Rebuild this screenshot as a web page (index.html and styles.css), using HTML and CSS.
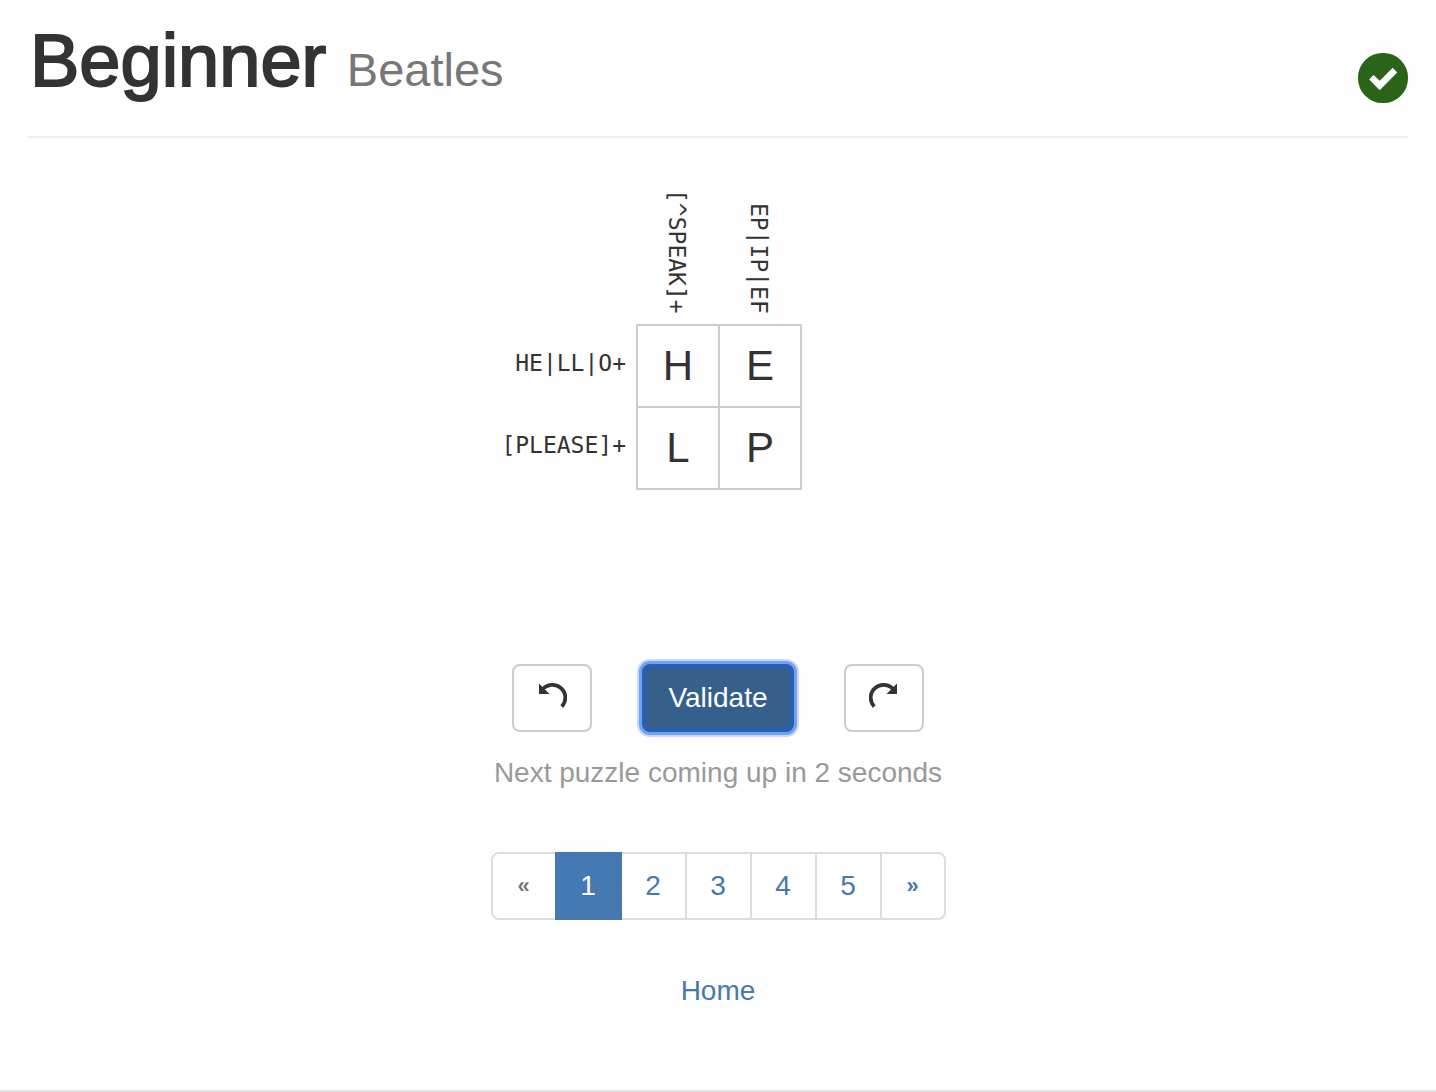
FILE: index.html
```html
<!DOCTYPE html>
<html lang="en">
<head>
<meta charset="utf-8">
<title>Beatles - Beginner</title>
<link rel="stylesheet" href="styles.css">
</head>
<body>
<header class="page-header">
  <h1 class="title">Beginner <small class="subtitle">Beatles</small></h1>
  <svg class="solved" viewBox="0 0 50 50" role="img" aria-label="Solved">
    <rect width="50" height="50" rx="24.5" fill="#2a6419"/>
    <path d="M11.2 26.5L15.5 22L21.7 27.7L34.7 14.8L39.2 19.4L21.7 37.2Z" fill="#fff"/>
  </svg>
</header>
<main class="main">
  <table class="puzzle">
    <colgroup><col><col class="cell-col"><col class="cell-col"><col></colgroup>
    <thead>
      <tr>
        <td></td>
        <th scope="col" class="clue-col"><span class="vertical">[^SPEAK]+</span></th>
        <th scope="col" class="clue-col"><span class="vertical">EP|IP|EF</span></th>
        <td></td>
      </tr>
    </thead>
    <tbody>
      <tr>
        <th scope="row" class="clue-row">HE|LL|O+</th>
        <td class="cell"><input class="letter" maxlength="1" value="H" aria-label="Row 1, column 1"></td>
        <td class="cell"><input class="letter" maxlength="1" value="E" aria-label="Row 1, column 2"></td>
        <td></td>
      </tr>
      <tr>
        <th scope="row" class="clue-row">[PLEASE]+</th>
        <td class="cell"><input class="letter" maxlength="1" value="L" aria-label="Row 2, column 1"></td>
        <td class="cell"><input class="letter" maxlength="1" value="P" aria-label="Row 2, column 2"></td>
        <td></td>
      </tr>
    </tbody>
  </table>
  <div class="actions">
    <button type="button" class="btn btn-icon" aria-label="Undo">
      <svg class="icon" viewBox="0 0 30 32"><path d="M2 1.5V12H12.5Z" fill="#333"/><path d="M5.5 7.5A12.9 12.9 0 1 1 24.8 24.6" fill="none" stroke="#333" stroke-width="3.8"/></svg>
    </button>
    <button type="button" class="btn btn-primary">Validate</button>
    <button type="button" class="btn btn-icon" aria-label="Redo">
      <svg class="icon" viewBox="0 0 30 32"><path d="M28 1.5V12H17.5Z" fill="#333"/><path d="M24.5 7.5A12.9 12.9 0 1 0 5.2 24.6" fill="none" stroke="#333" stroke-width="3.8"/></svg>
    </button>
  </div>
  <p class="status">Next puzzle coming up in 2 seconds</p>
  <nav aria-label="Puzzles">
    <ul class="pagination">
      <li><span class="page arrow disabled">«</span></li>
      <li><a class="page active" href="#1" aria-current="page">1</a></li>
      <li><a class="page" href="#2">2</a></li>
      <li><a class="page" href="#3">3</a></li>
      <li><a class="page" href="#4">4</a></li>
      <li><a class="page" href="#5">5</a></li>
      <li><a class="page arrow" href="#next">»</a></li>
    </ul>
  </nav>
  <a class="home" href="#home">Home</a>
</main>
<footer class="footer"></footer>
</body>
</html>
```
FILE: styles.css
```css
* {
  box-sizing: border-box;
}

body {
  display: flex;
  flex-direction: column;
  min-height: 100vh;
  margin: 0;
  background: #fefefe;
  color: #333;
  font: 28px/40px "Liberation Sans", Arial, sans-serif;
}

a {
  color: #4479b2;
  text-decoration: none;
}

.page-header {
  display: flex;
  justify-content: space-between;
  align-items: flex-start;
  margin: 0 28px;
  padding: 20px 0 33px;
  border-bottom: 2px solid #eee;
}

.title {
  margin: 0;
  padding-left: 2px;
  font-size: 74px;
  line-height: 82px;
  font-weight: 400;
  -webkit-text-stroke: 2px #333;
}

.subtitle {
  color: #777;
  font-size: 47px;
  line-height: 1;
  -webkit-text-stroke: 0;
}

.solved {
  width: 50px;
  height: 50px;
  margin-top: 33px;
}

.main {
  display: flex;
  flex-direction: column;
  align-items: center;
  padding: 0 28px;
}

.puzzle {
  width: 100%;
  table-layout: fixed;
  border-spacing: 0;
}

.puzzle th,
.puzzle td {
  padding: 0;
}

.cell-col {
  width: 82px;
}

.puzzle .clue-col,
.puzzle .clue-row {
  font: 23px/28px "DejaVu Sans Mono", monospace;
}

.puzzle .clue-col {
  height: 186px;
  padding-bottom: 10px;
  vertical-align: bottom;
}

.vertical {
  display: block;
  width: 28px;
  margin: 0 auto;
  writing-mode: vertical-rl;
}

.puzzle .clue-row {
  padding: 0 10px 4px 0;
  text-align: right;
}

.cell {
  height: 82px;
}

.letter {
  display: block;
  width: 84px;
  height: 84px;
  margin: 0 -2px -2px 0;
  padding: 0;
  border: 2px solid #ccc;
  border-radius: 0;
  background: transparent;
  color: #333;
  font: 42px/80px "Liberation Sans", Arial, sans-serif;
  text-align: center;
}

.actions {
  display: flex;
  gap: 50px;
  margin-top: 176px;
}

.btn {
  height: 68px;
  padding: 0 24px;
  border: 2px solid #ccc;
  border-radius: 8px;
  background: #fff;
  font: inherit;
}

.btn-icon {
  display: flex;
  justify-content: center;
  align-items: center;
  width: 80px;
}

.icon {
  flex: none;
  width: 30px;
  height: 32px;
}

.btn-primary {
  border-color: #255fbf;
  background: #35608b;
  color: #fff;
  box-shadow: inset 0 0 3px 1px #255fbf, 0 0 0 3px #73a0f3, 0 0 0 5px #c8d9fa;
}

.status {
  margin: 21px 0 0;
  color: #999;
}

.pagination {
  display: flex;
  margin: 59px 0 51px;
  padding: 0;
  list-style: none;
}

.pagination li + li {
  margin-left: -2px;
}

.page {
  display: block;
  width: 67px;
  padding: 12px 0;
  border: 2px solid #ddd;
  background: #fff;
  text-align: center;
}

.arrow {
  width: 66px;
  font-size: 22px;
  font-weight: 700;
}

.disabled {
  color: #777;
}

.pagination li:first-child .page {
  border-radius: 8px 0 0 8px;
}

.pagination li:last-child .page {
  border-radius: 0 8px 8px 0;
}

.pagination .active {
  position: relative;
  border-color: #4479b2;
  background: #4479b2;
  color: #fff;
}

.footer {
  margin-top: auto;
  border-top: 2px solid #e5e5e5;
}
```
